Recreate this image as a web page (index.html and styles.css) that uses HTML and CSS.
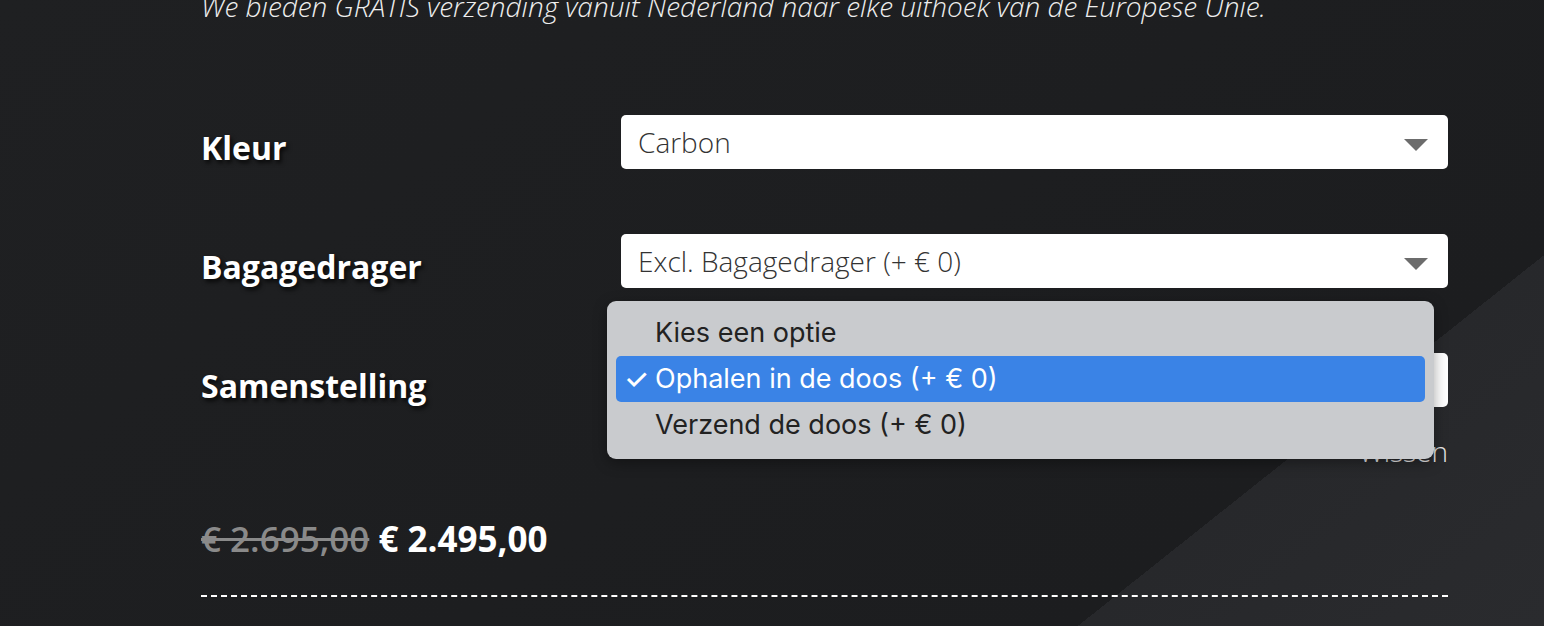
FILE: index.html
```html
<!DOCTYPE html>
<html lang="nl">
<head>
  <meta charset="UTF-8">
  <title>Product</title>
  <link rel="stylesheet" href="styles.css">
</head>
<body>
<div class="product">
  <p class="shipping">We bieden GRATIS verzending vanuit Nederland naar elke uithoek van de Europese Unie.</p>

  <form class="variations">
    <label class="label" for="kleur">Kleur</label>
    <div class="select">
      <span>Carbon</span>
      <i class="arrow"></i>
    </div>

    <label class="label" for="bagagedrager">Bagagedrager</label>
    <div class="select">
      <span>Excl. Bagagedrager (+ € 0)</span>
      <i class="arrow"></i>
    </div>

    <label class="label" for="samenstelling">Samenstelling</label>
    <div class="select-wrap">
      <div class="select">
        <span>Ophalen in de doos (+ € 0)</span>
        <i class="arrow"></i>
      </div>
      <ul class="popup">
        <li>Kies een optie</li>
        <li class="selected">Ophalen in de doos (+ € 0)</li>
        <li>Verzend de doos (+ € 0)</li>
      </ul>
      <a class="reset" href="#">Wissen</a>
    </div>
  </form>

  <div class="price">
    <del>€ 2.695,00</del> <ins>€ 2.495,00</ins>
  </div>
  <hr class="divider">
</div>
</body>
</html>
```

FILE: styles.css
```css
* {
  box-sizing: border-box;
}

html, body {
  width: 100%;
  height: 100%;
  overflow: hidden;
  margin: 0;
  padding: 0;
}

body {
  font-family: "Open Sans", sans-serif;
  color: #fff;
  background: linear-gradient(141.5deg, #1f2022 0%, #1c1d1f 80%, #27282b 80%, #2a2b2e 100%);
}

.product {
  margin: 0 96px 0 201px;
}

.shipping {
  margin: -13px 0 0;
  font: italic 300 28px "Open Sans", sans-serif;
  line-height: 38px;
  color: #eee;
}

.variations {
  display: grid;
  grid-template-columns: 420px 1fr;
  row-gap: 65px;
  margin-top: 90px;
}

.label {
  font-size: 32px;
  font-weight: 700;
  padding-top: 11px;
  text-shadow: 2px 3px 4px rgba(0, 0, 0, 0.75);
}

.select {
  display: flex;
  align-items: center;
  justify-content: space-between;
  height: 54px;
  padding: 0 20px 0 17px;
  background: #fff;
  border-radius: 5px;
  color: #333;
  font-size: 28px;
  font-weight: 300;
}

.arrow {
  width: 0;
  height: 0;
  border-left: 12px solid transparent;
  border-right: 12px solid transparent;
  border-top: 12px solid #6c6c6c;
  margin-top: 6px;
}

.select-wrap {
  position: relative;
}

.popup {
  position: absolute;
  left: -14px;
  right: 14px;
  top: -52px;
  margin: 0;
  padding: 9px 9px 11px;
  list-style: none;
  background: #c9cbce;
  border-radius: 9px;
  box-shadow: 0 4px 14px rgba(0, 0, 0, 0.35);
  font: 27px Inter, "Liberation Sans", sans-serif;
  color: #222;
}

.popup li {
  height: 46px;
  line-height: 46px;
  padding-left: 39px;
  border-radius: 5px;
  position: relative;
}

.popup li.selected {
  background: #3a83e6;
  color: #fff;
}

.popup li.selected::before {
  content: "✓";
  position: absolute;
  left: 8px;
  font-weight: 500;
  font-size: 28px;
}

.reset {
  display: block;
  text-align: right;
  margin-top: 25px;
  color: #e6e6e6;
  font-size: 28px;
  font-weight: 300;
  text-decoration: none;
}

.price {
  margin-top: 45px;
  font-size: 35px;
  font-weight: 700;
}

.price del {
  color: #8a8a8a;
  font-weight: 600;
}

.price ins {
  text-decoration: none;
}

.divider {
  margin: 33px 0 0;
  border: none;
  border-top: 2px dashed #fff;
}
```
